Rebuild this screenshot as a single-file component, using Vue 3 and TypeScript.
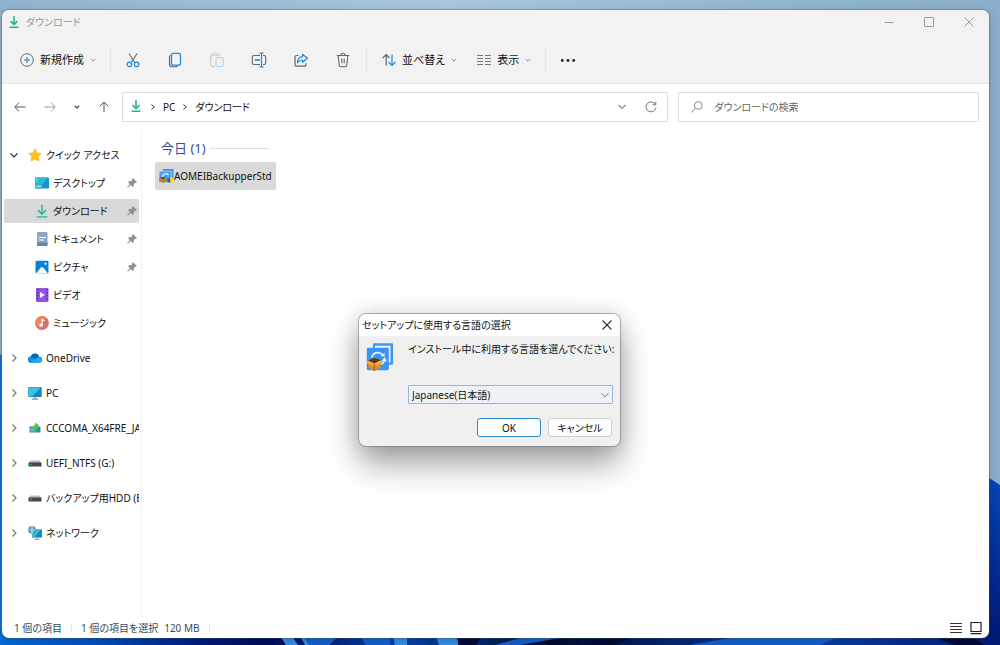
<script setup lang="ts">
import { ref } from 'vue'

interface TreeItem {
  label: string
  icon: string
  pinned?: boolean
  selected?: boolean
}

const quickItems: TreeItem[] = [
  { label: 'デスクトップ', icon: 'desktop', pinned: true },
  { label: 'ダウンロード', icon: 'download', pinned: true, selected: true },
  { label: 'ドキュメント', icon: 'document', pinned: true },
  { label: 'ピクチャ', icon: 'picture', pinned: true },
  { label: 'ビデオ', icon: 'video' },
  { label: 'ミュージック', icon: 'music' },
]

const rootItems: TreeItem[] = [
  { label: 'OneDrive', icon: 'cloud' },
  { label: 'PC', icon: 'pc' },
  { label: 'CCCOMA_X64FRE_JA', icon: 'installer' },
  { label: 'UEFI_NTFS (G:)', icon: 'drive' },
  { label: 'バックアップ用HDD (E:', icon: 'drive' },
  { label: 'ネットワーク', icon: 'network' },
]

const query = ref('')
const language = ref('ja')
</script>

<template>
  <div class="desktop">
    <svg class="wallpaper" viewBox="0 0 1000 645" preserveAspectRatio="none" aria-hidden="true">
      <defs>
        <linearGradient id="sky" x1="0" x2="1">
          <stop offset="0" stop-color="#8fb4cf" />
          <stop offset=".45" stop-color="#a8c6dc" />
          <stop offset=".8" stop-color="#8fb5d1" />
          <stop offset="1" stop-color="#8aaecb" />
        </linearGradient>
        <linearGradient id="floor" x1="0" x2="1">
          <stop offset="0" stop-color="#0669dc" />
          <stop offset=".1" stop-color="#0450bd" />
          <stop offset=".2" stop-color="#011a7c" />
          <stop offset=".27" stop-color="#010a58" />
          <stop offset=".4" stop-color="#0646b0" />
          <stop offset=".55" stop-color="#020b2e" />
          <stop offset=".7" stop-color="#052a80" />
          <stop offset=".82" stop-color="#0a3fa8" />
          <stop offset="1" stop-color="#011a72" />
        </linearGradient>
        <linearGradient id="petal" x1="0" y1="0" x2="0" y2="1">
          <stop offset="0" stop-color="#0747b8" />
          <stop offset="1" stop-color="#011673" />
        </linearGradient>
      </defs>
      <rect width="1000" height="645" fill="url(#sky)" />
      <path d="M0 355h4v290H0z" fill="#1473e0" />
      <path d="M980 472l20 13v160h-20z" fill="url(#petal)" />
      <path d="M0 630h1000v15H0z" fill="url(#floor)" />
      <path d="M280 636h12l6 9h-12zM393 636h14v9h-12zM436 636h20l3 9h-20zM300 636h4l6 9h-5z" fill="#348fe4" />
      <path d="M303 636h36l-10 9h-20zM360 636h30v9h-24zM560 638l-40 7h-25l25-7zM740 636h100l-20 9H690z" fill="#1560ce" />
      <path d="M458 636h24l-6 9h-18zM610 636l-30 9h35l20-9zM930 636h40l15 9h-30z" fill="#020a3a" />
    </svg>

    <main class="window">
      <header class="chrome">
        <div class="titlebar">
          <svg class="i14" viewBox="0 0 14 14"><path d="M7 1v8M3.5 6 7 9.5 10.5 6M2.5 12.3h9" fill="none" stroke="#1fb497" stroke-width="1.6" /></svg>
          <span class="title">ダウンロード</span>
          <div class="caption">
            <button type="button" aria-label="最小化"><svg viewBox="0 0 12 12"><path d="M1.500 6.500h9" /></svg></button>
            <button type="button" aria-label="最大化"><svg viewBox="0 0 12 12"><rect x="1.500" y="1.500" width="9" height="9" rx=".6" /></svg></button>
            <button type="button" aria-label="閉じる"><svg viewBox="0 0 12 12"><path d="M1.500 1.500l9 9M10.500 1.500l-9 9" /></svg></button>
          </div>
        </div>
        <div class="toolbar">
          <button type="button" class="textbtn">
            <svg class="i14" viewBox="0 0 14 14" fill="none"><circle cx="7" cy="7" r="6.300" stroke="#666" /><path d="M7 4v6M4 7h6" stroke="#1a82d8" stroke-width="1.200" /></svg>
            <span>新規作成</span>
            <svg class="chev" viewBox="0 0 6 6"><path d="M.8 2 3 4.200 5.200 2" /></svg>
          </button>
          <span class="sep"></span>
          <div class="icons">
            <button type="button" aria-label="切り取り"><svg class="i16" viewBox="0 0 16 16" fill="none"><path d="M4 1.500l5.800 9.200M12 1.500l-5.800 9.200" stroke="#666" stroke-width="1.100" /><circle cx="4.400" cy="12.400" r="2.200" stroke="#2188dc" stroke-width="1.200" /><circle cx="11.600" cy="12.400" r="2.200" stroke="#2188dc" stroke-width="1.200" /></svg></button>
            <button type="button" aria-label="コピー"><svg class="i16" viewBox="0 0 16 16" fill="none"><path d="M3.500 3.200Q2.500 3.500 2.500 5v7q0 2.700 2.700 2.700h4q1.500 0 1.800-1" stroke="#666" stroke-width="1.100" /><rect x="4.500" y="1.400" width="9" height="11.800" rx="1.600" stroke="#2188dc" stroke-width="1.300" /></svg></button>
            <button type="button" aria-label="貼り付け" disabled><svg class="i16" viewBox="0 0 16 16" fill="none"><path d="M6 14.500H3q-1.200 0-1.200-1.200V3.700Q1.800 2.500 3 2.500h7q1.200 0 1.200 1.200" stroke="#c4c4c4" /><rect x="4" y="1.300" width="5" height="2.300" rx="1.100" stroke="#c4c4c4" fill="#f2f2f2" /><rect x="7" y="5.500" width="7.300" height="9" rx="1.300" stroke="#a9d2f0" /></svg></button>
            <button type="button" aria-label="名前の変更"><svg class="i16" viewBox="0 0 16 16" fill="none"><path d="M9 3.500H3Q1.300 3.500 1.300 5v6q0 1.500 1.700 1.500h6M12 3.500h1q1.700 0 1.700 1.500v6q0 1.500-1.700 1.500h-1" stroke="#666" stroke-width="1.100" /><path d="M3.700 8h5.300" stroke="#1a82d8" stroke-width="1.600" /><path d="M8.600 1.200h3.800M8.600 14.800h3.800M10.500 1.200v13.600" stroke="#2188dc" stroke-width="1.200" /></svg></button>
            <button type="button" aria-label="共有"><svg class="i16" viewBox="0 0 16 16" fill="none"><path d="M5.500 3.500H4Q2 3.500 2 5.500v6.700q0 2 2 2h7q2 0 2-2v-1" stroke="#666" stroke-width="1.200" /><path d="M9.500 2.200 14.500 6.200 9.500 10.200V8q-3 0-5 2.700Q4.800 5 9.500 4.600z" stroke="#2188dc" stroke-width="1.200" stroke-linejoin="round" /></svg></button>
            <button type="button" aria-label="削除"><svg class="i16" viewBox="0 0 16 16" fill="none" stroke="#666" stroke-width="1.100"><path d="M1.800 3.500h12.400M6 3.300Q6 1.300 8 1.300T10 3.300M3.200 3.500l1 9.700q.2 1.500 1.500 1.500h4.600q1.300 0 1.500-1.500l1-9.700M6.800 6.500v4.800M9.200 6.500v4.800" /></svg></button>
          </div>
          <span class="sep"></span>
          <button type="button" class="textbtn">
            <svg class="i14" viewBox="0 0 14 14" fill="none" stroke-width="1.200"><path d="M4.200 12.500v-11M.7 5l3.500-3.500L7.500 5" stroke="#666" /><path d="M10 1.500v11M6.700 9l3.300 3.500L13.500 9" stroke="#2188dc" /></svg>
            <span>並べ替え</span>
            <svg class="chev" viewBox="0 0 6 6"><path d="M.8 2 3 4.200 5.200 2" /></svg>
          </button>
          <button type="button" class="textbtn">
            <svg class="i14" viewBox="0 0 14 14" fill="none" stroke="#777"><path d="M0 2.500h6M8 2.500h6M0 5.500h6M8 5.500h6M0 8.500h6M8 8.500h6M0 11.500h6M8 11.500h6" /></svg>
            <span>表示</span>
            <svg class="chev" viewBox="0 0 6 6"><path d="M.8 2 3 4.200 5.200 2" /></svg>
          </button>
          <span class="sep"></span>
          <button type="button" class="more" aria-label="その他"><svg class="i16" viewBox="0 0 16 16" fill="#222"><circle cx="2.300" cy="8.500" r="1.400" /><circle cx="8" cy="8.500" r="1.400" /><circle cx="13.700" cy="8.500" r="1.400" /></svg></button>
        </div>
      </header>

      <div class="addressrow">
        <div class="nav">
          <button type="button" aria-label="戻る"><svg class="i14" viewBox="0 0 14 14"><path d="M12.500 7H2M6 2.700 1.700 7 6 11.300" stroke="#555" /></svg></button>
          <button type="button" aria-label="進む"><svg class="i14" viewBox="0 0 14 14"><path d="M1.500 7H12M8 2.700 12.300 7 8 11.300" stroke="#999" /></svg></button>
          <button type="button" class="narrow" aria-label="最近の場所"><svg class="i14" viewBox="0 0 14 14"><path d="M4.800 5.800 7 8l2.200-2.200" stroke="#555" stroke-width="1.300" /></svg></button>
          <button type="button" aria-label="上へ"><svg class="i14" viewBox="0 0 14 14"><path d="M7 12.300V2M2.700 6.300 7 2l4.300 4.300" stroke="#555" /></svg></button>
        </div>
        <nav class="address" aria-label="アドレス">
          <svg class="i14" viewBox="0 0 14 14"><path d="M7 0v8M3.500 5 7 8.500 10.500 5M2.500 11.300h9" fill="none" stroke="#1fb497" stroke-width="1.600" /></svg>
          <svg class="crumb" viewBox="0 0 6 8"><path d="M1.500 1.500 4.300 4 1.500 6.500" /></svg>
          <a href="#pc">PC</a>
          <svg class="crumb" viewBox="0 0 6 8"><path d="M1.500 1.500 4.300 4 1.500 6.500" /></svg>
          <a href="#downloads">ダウンロード</a>
          <span class="grow"></span>
          <button type="button" aria-label="履歴"><svg class="i14" viewBox="0 0 14 14"><path d="M3.500 5 7 8.500 10.500 5" stroke="#888" fill="none" stroke-width="1.200" /></svg></button>
          <button type="button" aria-label="最新の情報に更新"><svg class="i14" viewBox="0 0 14 14"><path d="M11.500 4.600A5 5 0 1 0 12 7.500M11.800 1.500v3.300H8.500" stroke="#777" fill="none" /></svg></button>
        </nav>
        <label class="search">
          <svg class="i14" viewBox="0 0 14 14"><path d="M5.300 8.700 1.500 12.500" stroke="#888" /><circle cx="8.300" cy="5.500" r="3.900" fill="none" stroke="#888" /></svg>
          <input v-model="query" type="search" placeholder="ダウンロードの検索" aria-label="ダウンロードの検索" />
        </label>
      </div>

      <div class="content">
        <nav class="tree" aria-label="フォルダー">
          <a href="#quick" class="row">
            <svg class="twist open" viewBox="0 0 10 10"><path d="M1.500 3.300 5 6.800 8.500 3.300" /></svg>
            <svg class="i14" viewBox="0 0 14 14"><path d="M7 .8 8.900 4.900l4.400.5-3.200 3.100.8 4.500L7 10.900 3.100 13l.8-4.500L.7 5.400l4.400-.5z" fill="#ffc21f" stroke="#f7a50d" stroke-width=".6" stroke-linejoin="round" /></svg>
            <span>クイック アクセス</span>
          </a>
          <a v-for="item in quickItems" :key="item.label" :href="'#' + item.icon" class="row child" :class="{ selected: item.selected }">
            <svg v-if="item.icon === 'desktop'" class="i14" viewBox="0 0 14 14"><path d="M0 2.500q0-1 1-1h12q1 0 1 1v9q0 1-1 1H1q-1 0-1-1z" fill="#1593c5" /><path d="M1 1.500h12L4 12.500H1q-1 0-1-1v-9q0-1 1-1z" fill="#2cb9d8" /><path d="M1.500 3.500h1M1.500 5.500h1M1.500 10.500h5" stroke="#d7f5fb" /></svg>
            <svg v-else-if="item.icon === 'download'" class="i14" viewBox="0 0 14 14"><path d="M7 .8v9M2.800 6 7 10.200 11.200 6M1.800 12.900h10.400" fill="none" stroke="#1fb497" stroke-width="1.400" /></svg>
            <svg v-else-if="item.icon === 'document'" class="i14" viewBox="0 0 14 14"><rect x="2" y="0" width="10.500" height="14" rx="1" fill="#8ba5c3" /><path d="M2 10.500h10.500V13q0 1-1 1H3q-1 0-1-1z" fill="#6584ab" /><path d="M4 5.500h7M4 8h5" stroke="#fff" stroke-width="1.200" /></svg>
            <svg v-else-if="item.icon === 'picture'" class="i14" viewBox="0 0 14 14"><rect x=".5" y=".8" width="13" height="12.400" rx="1.200" fill="#1180d1" /><path d="M1.500 13 5.800 7.500q1.200-1.200 2.400 0L12.500 13z" fill="#f2faff" /><circle cx="10.500" cy="3.800" r="1.100" fill="#fff" /></svg>
            <svg v-else-if="item.icon === 'video'" class="i14" viewBox="0 0 14 14"><rect x="1" y="0" width="12.500" height="14" rx="1.200" fill="#9451e4" /><path d="M2.500 1v12M12 1v12" stroke="#5b21a8" stroke-width="1.400" stroke-dasharray="1.500 1.500" /><path d="M5 4l5 3-5 3z" fill="#fff" /></svg>
            <svg v-else class="i14" viewBox="0 0 14 14"><circle cx="7" cy="7" r="6.900" fill="#d9716d" /><path d="M.2 7A6.900 6.900 0 0 1 11 1.500L2 11.700Q.2 10 .2 7z" fill="#ec8660" /><circle cx="6" cy="9.300" r="1.700" fill="#fff" /><path d="M7.200 9.300V3.500L9.500 4.700" stroke="#fff" stroke-width="1.200" fill="none" /></svg>
            <span>{{ item.label }}</span>
            <svg v-if="item.pinned" class="pin" viewBox="0 0 10 10"><path d="M6 .5 9.500 4l-.7.600-.7-.1L6.600 6l-.1 1.900-.8.800L3.700 6.700.8 9.300.5 9 3.100 6.200 1.300 4.300l.8-.8L4 3.400 5.500 1.900 5.400 1.200z" fill="#87929b" stroke="#87929b" stroke-width=".6" /></svg>
          </a>
          <a v-for="item in rootItems" :key="item.label" :href="'#' + item.icon" class="row root">
            <svg class="twist" viewBox="0 0 10 10"><path d="M3.500 1.500 7 5 3.500 8.500" /></svg>
            <svg v-if="item.icon === 'cloud'" class="i14" viewBox="0 0 14 14"><path d="M3.500 12A3.300 3.300 0 0 1 2.800 5.300 4.400 4.400 0 0 1 11 5.500 3.200 3.200 0 0 1 11 12z" fill="#1490df" /><path d="M2.800 5.300A4.400 4.400 0 0 1 11 5.500L6.500 8z" fill="#0864b8" /><path d="M2 11.500 11 6.200A3 3 0 0 1 11 12H3.500z" fill="#28a8ea" /></svg>
            <svg v-else-if="item.icon === 'pc'" class="i14" viewBox="0 0 14 14"><rect x=".3" y="1" width="13.400" height="10" rx=".7" fill="#1685b9" /><path d="M1 1.500h12L4 10.500H1z" fill="#36c5e4" /><path d="M7 11v2M4 13.200h6" stroke="#7c919b" stroke-width="1.200" /></svg>
            <svg v-else-if="item.icon === 'installer'" class="i14" viewBox="0 0 14 14"><path d="M1.500 5.500h11v6h-11z" fill="#4a7fb0" /><path d="M2.500 7h5v3.500h-5z" fill="#7fb0d3" /><path d="M5.500 10Q3 5.500 7 3.800L6.800 1.500 11 4.200 8.500 8.500 8 6.800Q6.500 7.500 8.500 10z" fill="#2fd54b" /></svg>
            <svg v-else-if="item.icon === 'drive'" class="i14" viewBox="0 0 14 14"><path d="M2.500 4.500h9L13.500 7H.5z" fill="#b9babb" /><rect x=".5" y="6.500" width="13" height="4" rx=".6" fill="#444748" /><path d="M2 8.500h1.500" stroke="#36d66b" /></svg>
            <svg v-else class="i14" viewBox="0 0 14 14"><rect x="4" y="3.500" width="10" height="8" fill="#1688bd" /><path d="M4 3.500h9L6 11.500H4z" fill="#35bce1" /><path d="M9 11.500V13M6.500 13.300h5" stroke="#829aa5" /><circle cx="4" cy="3.900" r="3.800" fill="#5795b9" /><path d="M1 4h6M4 .5q-2.200 3.400 0 6.800M4 .5q2.200 3.400 0 6.800" stroke="#bee5f3" fill="none" stroke-width=".8" /></svg>
            <span>{{ item.label }}</span>
          </a>
        </nav>

        <section class="files">
          <h2 class="group"><span>今日 (1)</span></h2>
          <button type="button" class="file">
            <svg class="i16" viewBox="0 0 30 30"><path d="M9 2h20v18h-4V6H9z" fill="#3992f0" /><rect x="2" y="6" width="23" height="21" rx="2" fill="#4a9df2" stroke="#d6eafc" /><path d="M8 18a7 7 0 0 1 12-5" stroke="#e1f0ff" stroke-width="2.500" fill="none" /><path d="M2 18h14v8l-6 2-8-3z" fill="#c48434" /><path d="M4 17h11l-6 5z" fill="#6b4717" /><path d="M17 20l6-1v9l-5-2z" fill="#1762bd" /><path d="M23 18h6v10h-6z" fill="#ffd32a" /></svg>
            <span>AOMEIBackupperStd</span>
          </button>
        </section>
      </div>

      <footer class="status">
        <span>1 個の項目</span>
        <i class="bar"></i>
        <span>1 個の項目を選択</span>
        <span class="size">120 MB</span>
        <i class="bar"></i>
        <span class="grow"></span>
        <button type="button" aria-label="詳細"><svg class="i14" viewBox="0 0 14 14"><path d="M1 2.500h12M1 5.500h12M1 8.500h12M1 11.500h12" stroke="#333" stroke-width="1.100" /></svg></button>
        <button type="button" aria-label="大きい縮小版"><svg class="i14" viewBox="0 0 14 14"><path d="M2 1.500h10v9H2zM1.500 12.700h11" stroke="#222" stroke-width="1.200" fill="none" /></svg></button>
      </footer>
    </main>

    <form class="dialog" role="dialog" aria-labelledby="dialog-title" @submit.prevent>
      <div class="dialog-title">
        <span id="dialog-title">セットアップに使用する言語の選択</span>
        <button type="button" aria-label="閉じる"><svg viewBox="0 0 12 12"><path d="M1.500 1.500l9 9M10.500 1.500l-9 9" stroke="#333" stroke-width="1.100" /></svg></button>
      </div>
      <div class="dialog-body">
        <svg class="logo" viewBox="0 0 28 28">
          <path d="M7 1.200q0-.9.900-.9h18.200q1 0 1 1v19.500q0 1-1 1H22v-2.400h2.500V2.800H9V5H7z" fill="#3f97f5" />
          <rect x=".8" y="4.700" width="22" height="22.500" rx="1.400" fill="#3894fa" />
          <path d="M5.500 14.500Q7.500 9.500 12 9.700q3 .2 4.600 2.500" fill="none" stroke="#e9f4ff" stroke-width="1.700" />
          <path d="M18.500 15.500Q18.500 20 14 21.500" fill="none" stroke="#e9f4ff" stroke-width="1.700" />
          <path d="M14.800 13l3.700.800.200-3.800zM16 18l2.800-4 1.800 4.500z" fill="#fff" />
          <path d="M1.800 17.500 8 15l7.300 2-.3 7.500L8.300 28l-6.100-3z" fill="#d88e2c" />
          <path d="M1.800 17.500 8 15l7.300 2-7 3.500z" fill="#5e3910" />
          <path d="M1.800 17.500.3 20l7 3 1-2.500zM15.300 17l1.500 2.500-6.500 3.500-2-2.500z" fill="#efac48" />
          <path d="M8.300 20.500V28" stroke="#a8651c" />
        </svg>
        <div class="fields">
          <label for="language">インストール中に利用する言語を選んでください:</label>
          <div class="combo">
            <select id="language" v-model="language">
              <option value="ja">Japanese(日本語)</option>
              <option value="en">English</option>
            </select>
            <svg viewBox="0 0 10 10"><path d="M1.500 3.300 5 6.800 8.500 3.300" /></svg>
          </div>
        </div>
      </div>
      <div class="actions">
        <button type="submit" class="primary">OK</button>
        <button type="button">キャンセル</button>
      </div>
    </form>
  </div>
</template>

<style>
body {
  margin: 0;
}
</style>

<style scoped>
.desktop {
  position: relative;
  display: flex;
  box-sizing: border-box;
  min-height: 100vh;
  padding: 10px 11px 7px 2px;
  overflow: hidden;
  font-family: "Noto Sans", "Noto Sans CJK JP", sans-serif;
  font-size: 10px;
  line-height: 16px;
  font-feature-settings: "palt";
  color: #111;
}
.wallpaper {
  position: absolute;
  inset: 0;
  width: 100%;
  height: 100%;
}
button,
input,
select {
  font: inherit;
  font-feature-settings: inherit;
  color: inherit;
}
button {
  display: flex;
  align-items: center;
  justify-content: center;
  padding: 0;
  border: 0;
  background: none;
}
a {
  color: inherit;
  text-decoration: none;
}
svg {
  flex: none;
  display: block;
}
.i14 {
  width: 14px;
  height: 14px;
}
.i16 {
  width: 16px;
  height: 16px;
}
.grow {
  flex: 1;
}
.window {
  position: relative;
  flex: 1;
  min-width: 0;
  display: flex;
  flex-direction: column;
  overflow: hidden;
  border-radius: 7px;
  background: #fff;
  box-shadow: 0 0 0 1px rgba(70, 90, 110, 0.35), 0 2px 8px rgba(0, 0, 0, 0.2);
}
.chrome {
  background: #f2f2f2;
  border-bottom: 1px solid #e8e8e8;
}
.titlebar {
  display: flex;
  align-items: center;
  gap: 5px;
  height: 24px;
  padding-left: 5px;
  color: #999;
}
.caption {
  display: flex;
  margin-left: auto;
}
.caption button {
  width: 40px;
  height: 24px;
}
.caption svg {
  width: 12px;
  height: 12px;
  fill: none;
  stroke: #999;
}
.toolbar {
  display: flex;
  align-items: center;
  height: 46px;
  padding: 3px 0 0 8px;
  font-size: 11px;
}
.textbtn {
  gap: 6px;
  height: 28px;
  padding: 0 10px;
}
.chev {
  width: 6px;
  height: 6px;
  fill: none;
  stroke: #888;
}
.sep {
  width: 1px;
  height: 28px;
  margin: 0 5px 0 4px;
  background: #e2e2e2;
}
.icons {
  display: flex;
  gap: 8px;
  margin-right: 2px;
}
.icons button,
.more {
  width: 34px;
  height: 28px;
}
.addressrow {
  display: flex;
  align-items: center;
  padding: 8px 10px 9px 3px;
}
.nav {
  display: flex;
  width: 117px;
}
.nav button {
  width: 30px;
  height: 28px;
}
.nav .narrow {
  width: 24px;
}
.nav svg {
  fill: none;
}
.address,
.search {
  display: flex;
  align-items: center;
  box-sizing: border-box;
  height: 30px;
  border: 1px solid #dedede;
}
.address {
  flex: 534;
  gap: 7px;
  padding: 0 5px 0 6px;
}
.crumb {
  width: 6px;
  height: 8px;
  fill: none;
  stroke: #333;
}
.address button {
  width: 22px;
  height: 28px;
}
.search {
  flex: 277;
  min-width: 0;
  margin-left: 10px;
  padding: 0 11px;
  gap: 10px;
}
.search input {
  flex: 1;
  min-width: 0;
  padding: 0;
  border: 0;
  outline: 0;
  background: none;
}
.search input::placeholder {
  color: #666;
  opacity: 1;
}
.content {
  flex: 1;
  display: flex;
}
.tree {
  flex: none;
  box-sizing: border-box;
  width: 140px;
  padding: 10px 2px 0;
  border-right: 1px solid #f2f2f2;
}
.row {
  display: flex;
  align-items: center;
  gap: 4px;
  height: 24px;
  margin: 2px 0 4px;
  padding-left: 5px;
  overflow: hidden;
  white-space: nowrap;
}
.row .i14 {
  margin-left: 5px;
}
.child {
  padding-left: 26px;
  border-radius: 2px;
}
.selected {
  background: #d9d9d9;
}
.root {
  margin: 11px 0 0;
}
.twist {
  width: 10px;
  height: 10px;
  fill: none;
  stroke: #777;
  stroke-width: 1.2px;
}
.twist.open {
  stroke: #222;
}
.pin {
  width: 10px;
  height: 10px;
  margin-left: auto;
  margin-right: 2px;
}
.files {
  flex: 1;
  padding: 8px 13px;
}
.group {
  display: flex;
  align-items: center;
  gap: 4px;
  width: 108px;
  margin: 0 0 5px 6px;
  font-size: 13px;
  font-weight: 400;
  line-height: 18px;
  color: #3c4a9c;
}
.group::after {
  content: "";
  flex: 1;
  height: 1px;
  background: #dedede;
}
.file {
  gap: 0;
  height: 28px;
  padding: 0 4px 0 3px;
  border-radius: 2px;
  background: #d9d9d9;
}
.status {
  display: flex;
  align-items: center;
  height: 20px;
  padding: 0 3px 0 12px;
  color: #34495e;
}
.status .bar {
  width: 1px;
  height: 10px;
  margin: 0 9px;
  background: #e8e8e8;
}
.status .size {
  margin-left: 6px;
}
.status button {
  width: 20px;
  height: 18px;
}
.dialog {
  position: absolute;
  left: calc(50% - 141px);
  top: 314px;
  box-sizing: border-box;
  width: 261px;
  padding-bottom: 9px;
  overflow: hidden;
  border-radius: 7px;
  background: #f0f0f0;
  box-shadow: 0 0 0 1px rgba(110, 110, 110, 0.5), 0 18px 32px rgba(0, 0, 0, 0.36), 0 0 22px rgba(0, 0, 0, 0.14);
}
.dialog-title {
  display: flex;
  align-items: center;
  justify-content: space-between;
  height: 22px;
  padding: 0 3px;
  background: #fff;
  white-space: nowrap;
}
.dialog-title button {
  width: 20px;
  height: 20px;
}
.dialog-title svg {
  width: 12px;
  height: 12px;
}
.dialog-body {
  display: flex;
  gap: 14px;
  padding: 5px 7px 0;
}
.logo {
  width: 28px;
  height: 28px;
  margin-top: 2px;
}
.fields {
  flex: 1;
  min-width: 0;
  display: flex;
  flex-direction: column;
  gap: 28px;
  white-space: nowrap;
}
.combo {
  position: relative;
}
.combo select {
  display: block;
  box-sizing: border-box;
  width: 100%;
  height: 19px;
  padding: 0 20px 0 3px;
  appearance: none;
  border: 1px solid #8fb9df;
  border-radius: 1px;
  background: #edf2f9;
}
.combo svg {
  position: absolute;
  right: 3px;
  top: 5px;
  width: 10px;
  height: 10px;
  fill: none;
  stroke: #777;
  pointer-events: none;
}
.actions {
  display: flex;
  justify-content: flex-end;
  gap: 7px;
  padding: 14px 8px 0;
}
.actions button {
  box-sizing: border-box;
  width: 64px;
  height: 19px;
  border: 1px solid #cfcfcf;
  border-radius: 3px;
  background: #fdfdfd;
}
.actions .primary {
  border-color: #2b88d0;
}
</style>
